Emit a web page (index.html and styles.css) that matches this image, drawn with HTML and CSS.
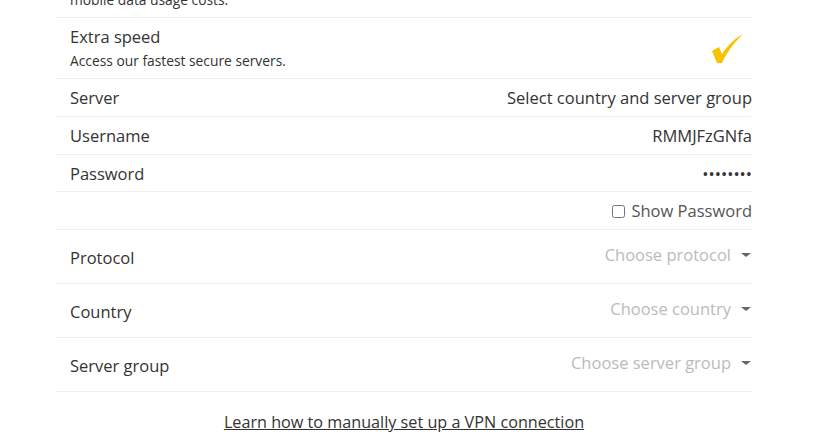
FILE: index.html
```html
<!DOCTYPE html>
<html>
<head>
  <title>VPN Settings</title>
  <link rel="stylesheet" href="styles.css">
</head>
<body>
  <div id="settings">
    <!-- Options -->
    <div class="option-row">
      <div class="option-text">
        <div class="option-title">Data compression</div>
        <div class="option-desc">mobile data usage costs.</div>
      </div>
    </div>
    <div class="option-row">
      <div class="option-text">
        <div class="option-title">Extra speed</div>
        <div class="option-desc">Access our fastest secure servers.</div>
      </div>
      <svg class="check" width="34" height="32" viewBox="0 0 34 32">
        <path d="M2 18 L9 14 L12 21 C17 13 24 6 33 1 C26 8 18 17 12 30 L7 30 Z" fill="#f8c300"/>
      </svg>
    </div>

    <!-- Account -->
    <div class="info-row">
      <span class="label">Server</span>
      <span class="value">Select country and server group</span>
    </div>
    <div class="info-row">
      <span class="label">Username</span>
      <span class="value">RMMJFzGNfa</span>
    </div>
    <div class="info-row">
      <span class="label">Password</span>
      <span class="value">&bull;&bull;&bull;&bull;&bull;&bull;&bull;&bull;</span>
    </div>
    <div class="info-row show-row">
      <label class="show-password"><input type="checkbox" id="show-password"> Show Password</label>
    </div>

    <!-- Selects -->
    <div class="select-row">
      <span class="label">Protocol</span>
      <div class="select"><span>Choose protocol</span><span class="caret"></span></div>
    </div>
    <div class="select-row">
      <span class="label">Country</span>
      <div class="select"><span>Choose country</span><span class="caret"></span></div>
    </div>
    <div class="select-row">
      <span class="label">Server group</span>
      <div class="select"><span>Choose server group</span><span class="caret"></span></div>
    </div>

    <div class="manual-link">
      <a href="#">Learn how to manually set up a VPN connection</a>
    </div>
  </div>
</body>
</html>
```

FILE: styles.css
```css
body {
  margin: 0;
  padding: 0;
  background-color: #fff;
  font-family: "Open Sans", Arial, sans-serif;
  color: #333;
  overflow: hidden;
}

#settings {
  width: 696px;
  margin: -43px 0 0 56px;
}

.option-row {
  display: flex;
  justify-content: space-between;
  align-items: center;
  padding: 7px 8px 5px 14px;
  border-bottom: 1px solid #eee;
}

.option-title {
  font-size: 16.5px;
  line-height: 24px;
}

.option-desc {
  font-size: 13.8px;
  line-height: 24px;
}

.check {
  display: block;
}

.info-row {
  display: flex;
  justify-content: space-between;
  align-items: center;
  padding: 7px 0 5px 14px;
  border-bottom: 1px solid #eee;
  font-size: 16.5px;
  line-height: 24.75px;
}

.show-row {
  justify-content: flex-end;
}

.show-password {
  display: flex;
  align-items: center;
  color: #555;
}

.show-password input {
  width: 13px;
  height: 13px;
  margin: 0 6px 0 0;
}

.select-row {
  display: flex;
  justify-content: space-between;
  align-items: center;
  padding: 12px 0 9px 14px;
  border-bottom: 1px solid #eee;
  font-size: 16.5px;
  line-height: 26px;
}

.select {
  display: flex;
  align-items: center;
  color: #bbb;
  margin-bottom: 6px;
}

.caret {
  display: inline-block;
  width: 0;
  height: 0;
  margin: 0 1px 0 10px;
  border-left: 5.5px solid transparent;
  border-right: 5.5px solid transparent;
  border-top: 4.5px solid #666;
}

.manual-link {
  text-align: center;
  padding-top: 18px;
  font-size: 16.2px;
  line-height: 24px;
}

.manual-link a {
  color: #333;
}
```
